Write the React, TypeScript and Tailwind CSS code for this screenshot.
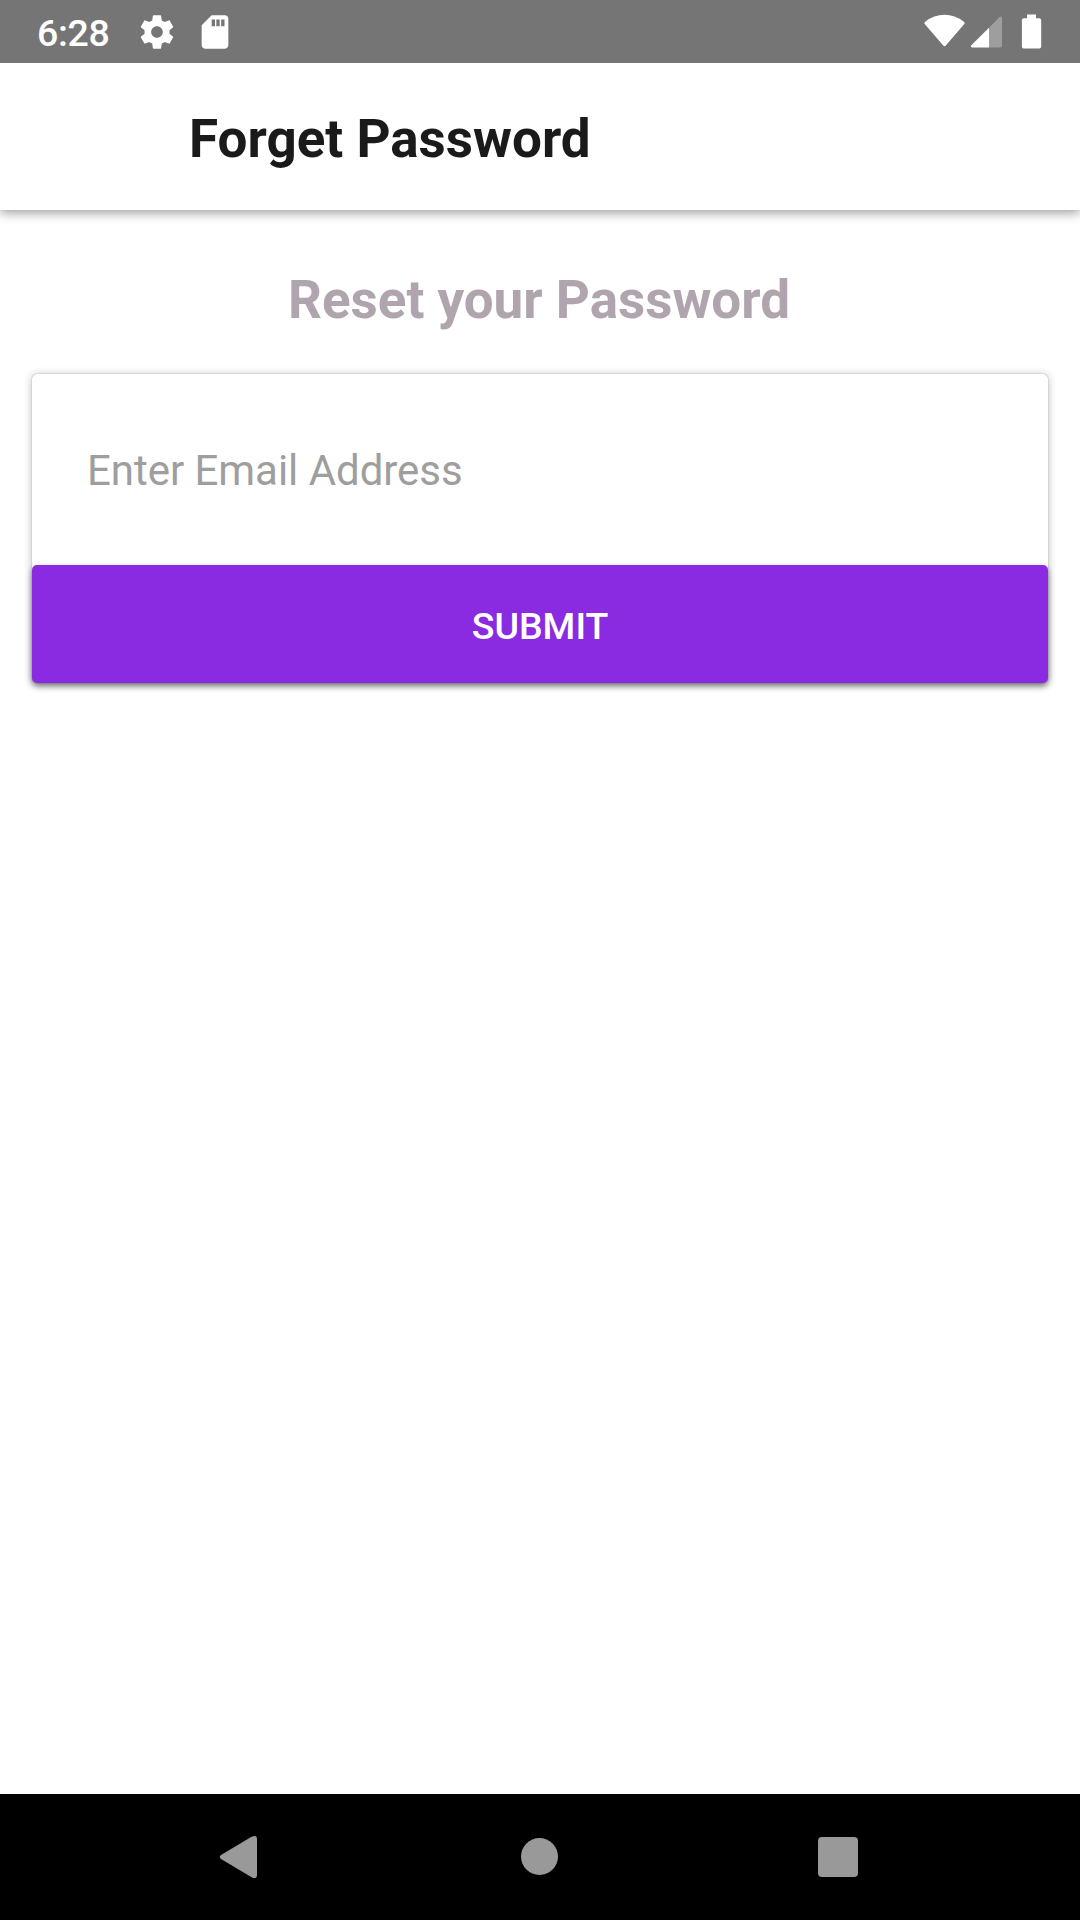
export default function App() {
  return (
    <div className="flex h-[1920px] w-[1080px] flex-col bg-white font-['Roboto',sans-serif]">
      <div className="z-20 flex h-[63px] items-center bg-[#757575] pl-[37px] text-white">
        <span className="w-[74px] pt-[5px] text-[37.5px] font-medium leading-none tracking-[-0.3px]">6:28</span>
        <svg className="ml-[26px]" width="40" height="40" viewBox="0 0 24 24" fill="#fff"><path d="M19.43 12.98c.04-.32.07-.64.07-.98s-.03-.66-.07-.98l2.11-1.65c.19-.15.24-.42.12-.64l-2-3.46c-.12-.22-.39-.3-.61-.22l-2.49 1c-.52-.4-1.08-.73-1.69-.98l-.38-2.65C14.46 2.18 14.25 2 14 2h-4c-.25 0-.46.18-.49.42l-.38 2.65c-.61.25-1.17.59-1.69.98l-2.49-1c-.23-.09-.49 0-.61.22l-2 3.46c-.13.22-.07.49.12.64l2.11 1.65c-.04.32-.07.65-.07.98s.03.66.07.98l-2.11 1.65c-.19.15-.24.42-.12.64l2 3.46c.12.22.39.3.61.22l2.49-1c.52.4 1.08.73 1.69.98l.38 2.65c.03.24.24.42.49.42h4c.25 0 .46-.18.49-.42l.38-2.65c.61-.25 1.17-.59 1.69-.98l2.49 1c.23.09.49 0 .61-.22l2-3.46c.12-.22.07-.49-.12-.64l-2.11-1.65zM12 15.5c-1.93 0-3.5-1.57-3.5-3.5s1.57-3.5 3.5-3.5 3.5 1.57 3.5 3.5-1.57 3.5-3.5 3.5z"/></svg>
        <svg className="ml-[18px]" width="40" height="40" viewBox="0 0 24 24" fill="#fff"><path d="M18 2h-8L4.02 8 4 20c0 1.1.9 2 2 2h12c1.1 0 2-.9 2-2V4c0-1.1-.9-2-2-2zm-6 6.500h-2V4.500h2v4zm2.800 0h-2V4.500h2v4zm2.900 0h-2V4.500h2v4z"/></svg>
        <svg className="ml-auto mr-[36px]" width="120" height="40" viewBox="924 11.5 120 40" fill="#fff">
          <path d="M925.200 21.200Q934 14.300 944.500 14.300T963.800 21.200Q965.200 22.200 964.300 23.600L946 44.800Q944.500 46.500 943 44.800L924.700 23.600Q923.800 22.200 925.200 21.200Z"/>
          <path d="M989 27.200L999.300 16.700Q1002 15 1002 18V45Q1002 47 1000 47H989Z" opacity=".3"/>
          <path d="M989 27.200V47H972.500Q970 46.500 971.300 44.700Z"/>
          <path d="M1027 14h9v3.700h3.300q1.900 0 1.900 1.800v26.500q0 2-1.900 2h-15.500q-1.900 0-1.900-2V19.500q0-1.800 1.900-1.800h3.200z"/>
        </svg>
      </div>
      <div className="z-10 flex h-[147px] items-center bg-white pl-[189px] pt-[5px] shadow-[0_3px_10px_rgba(0,0,0,0.38)]">
        <h1 className="text-[53px] font-bold leading-none text-[#1a1a1a]">Forget Password</h1>
      </div>
      <h2 className="mt-[59px] pr-[2px] text-center text-[53px] font-bold leading-[62px] tracking-[-0.02px] text-[#b0a5af]">Reset your Password</h2>
      <div className="mx-[32px] mt-[43px] flex h-[309px] flex-col rounded-[5px] shadow-[0_0_1px_rgba(0,0,0,0.5),0_1px_8px_rgba(0,0,0,0.28)]">
        <div className="flex h-[191px] items-center pl-[55px] pt-[2px] text-[42px] tracking-[-0.04px] text-[#9e9e9e]">Enter Email Address</div>
        <button className="h-[118px] rounded-[5px] bg-[#8a2be2] pt-[5px] text-[37.5px] font-medium text-white shadow-[0_3px_6px_rgba(0,0,0,0.45)]">SUBMIT</button>
      </div>
      <div className="mt-auto flex h-[126px] items-center bg-black">
        <svg width="1080" height="126" viewBox="0 1794 1080 126" fill="#999"><path d="M221 1855L252 1836.500Q257 1834.500 257 1839V1875Q257 1879.500 252 1877.500L221 1859Q218.500 1857 221 1855Z"/><circle cx="539.5" cy="1856.500" r="18.500"/><rect x="818" y="1837" width="40" height="40" rx="4"/></svg>
      </div>
    </div>
  );
}
